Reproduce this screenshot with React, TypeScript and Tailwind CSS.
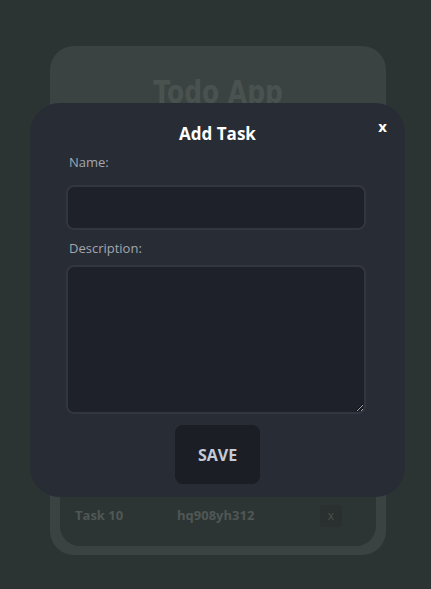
import React from "react";

export default function App() {
  return (
    <div className="relative h-[589px] w-[431px] overflow-hidden bg-[#2c3433]" style={{ fontFamily: '"Open Sans", "Noto Sans", sans-serif' }}>
      {/* background app card */}
      <div className="ml-[50px] mt-[46px] flex h-[509px] w-[336px] flex-col rounded-[24px] bg-[#3b4342] px-[10px] pb-[9px]">
        <div className="flex justify-center pt-[29px]">
          <h1
            className="inline-block scale-x-[0.78] text-[32px] font-bold leading-[34px] text-[#4a5250]"
            style={{ fontFamily: '"DejaVu Sans", sans-serif' }}
          >
            Todo App
          </h1>
        </div>
        <div className="mt-auto flex h-[200px] flex-col justify-end rounded-b-[20px] bg-[#2d3534]">
          <div className="flex h-[54px] items-center pb-[6px] pl-[15px] text-[13px] font-bold text-[#4f5755]">
            <span className="w-[102px]">Task 10</span>
            <span className="w-[143px]">hq908yh312</span>
            <span className="flex h-[22px] w-[22px] items-center justify-center rounded-[4px] bg-[#2a302f] text-[12px] font-normal text-[#4a5250]">x</span>
          </div>
        </div>
      </div>

      {/* modal */}
      <div className="absolute left-[30px] top-[103px] flex h-[394px] w-[375px] flex-col rounded-[30px] bg-[#282c35] px-[36px]">
        <button className="absolute right-[18px] top-[12px] text-[15px] font-bold text-white">x</button>
        <h2 className="mt-[19px] text-center text-[17px] font-bold leading-[24px] text-white">Add Task</h2>
        <label className="mt-[7px] pl-[3px] text-[13px] leading-[18px] text-[#a3a7ae]">Name:</label>
        <input className="mt-[14px] h-[45px] w-[300px] rounded-[8px] border-2 border-[#32363e] bg-[#1e2129] outline-none" />
        <label className="mt-[9px] pl-[3px] text-[13px] leading-[18px] text-[#a3a7ae]">Description:</label>
        <textarea className="mt-[8px] h-[149px] w-[300px] rounded-[8px] border-2 border-[#32363e] bg-[#1e2129] outline-none" />
        <button className="mx-auto mt-[11px] flex h-[59px] w-[85px] items-center justify-center rounded-[8px] bg-[#1b1e25] text-[16px] font-bold text-[#c4cad6]">
          SAVE
        </button>
      </div>
    </div>
  );
}
